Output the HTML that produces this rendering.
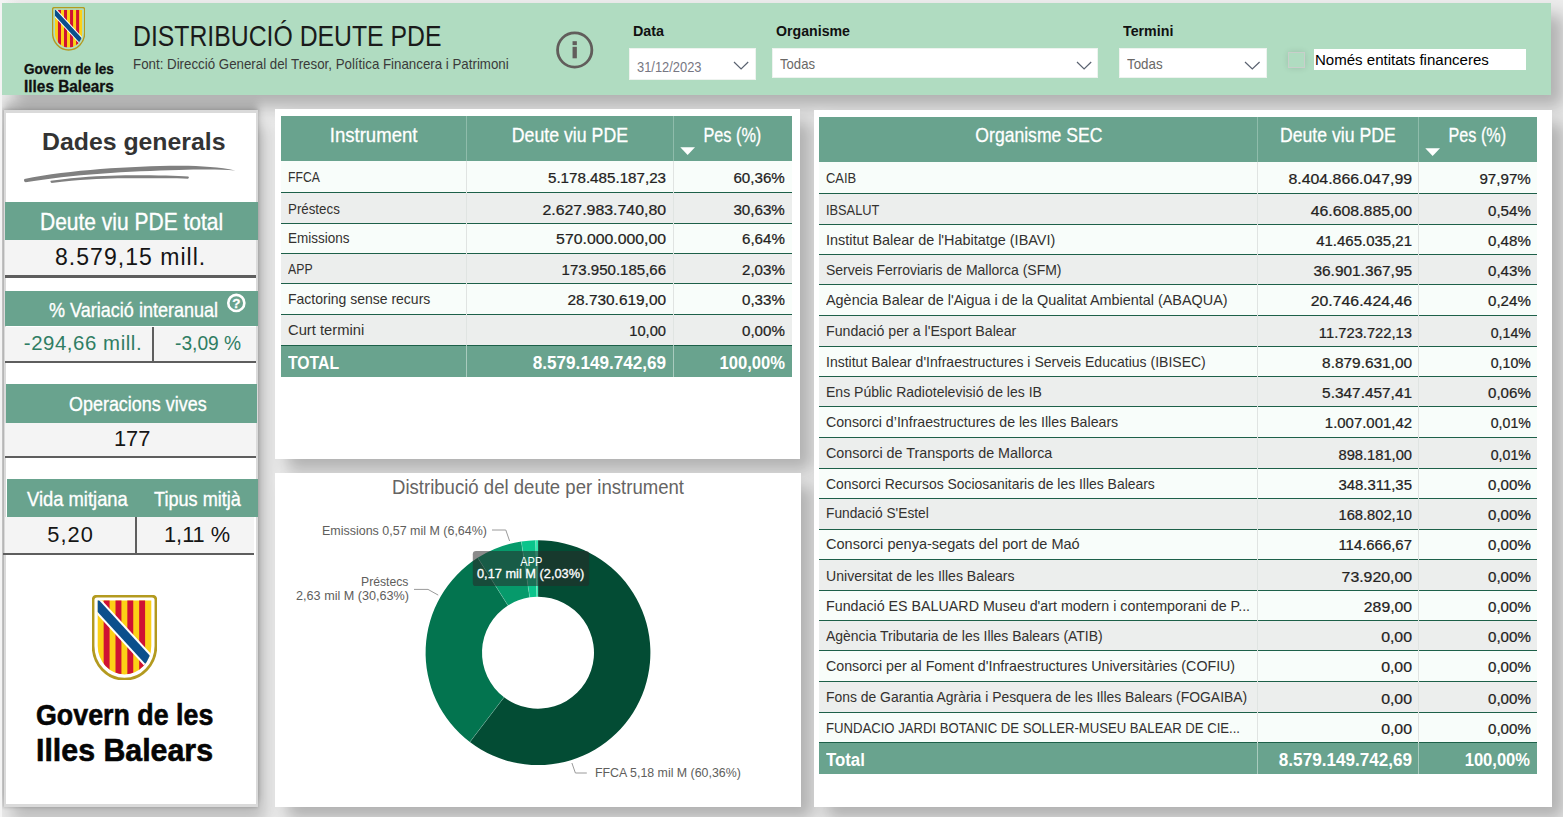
<!DOCTYPE html>
<html lang="ca"><head><meta charset="utf-8"><title>Distribució deute PDE</title>
<style>
html,body{margin:0;padding:0}
body{width:1563px;height:817px;overflow:hidden;background:#ececec;position:relative;font-family:'Liberation Sans', sans-serif}
#c{position:absolute;left:0;top:0;width:1563px;height:817px;overflow:hidden}
#c div,#c svg{position:absolute}
.t{position:absolute;white-space:nowrap;line-height:1;font-family:'Liberation Sans', sans-serif}
</style></head><body><div id="c">
<div style="left:0.00px;top:0.00px;width:2.00px;height:817.00px;background:#f4f4f4;z-index:20;"></div>
<div style="left:2.00px;top:0.00px;width:16.00px;height:3.00px;background:linear-gradient(to right,#f4f4f4,#ececec);z-index:1;"></div>
<div style="left:2.00px;top:3.00px;width:1549.00px;height:92.00px;background:#b0dcc1;z-index:1;box-shadow:12px 12px 16px rgba(0,0,0,0.25);"></div>
<svg style="left:52.10px;top:7.30px;z-index:6" width="33.20" height="43.57" viewBox="0 0 65 85.3">
<defs><clipPath id="ci52"><path d="M5.7,5.5 H59.3 V51 A26.8,28.4 0 0 1 5.7,51 Z"/></clipPath></defs>
<path d="M5,1.1 H60 Q63.9,1.1 63.9,5 V51 A31.4,33.2 0 0 1 1.1,51 V5 Q1.1,1.1 5,1.1 Z" fill="none" stroke="#b39a1f" stroke-width="2.7"/>
<g clip-path="url(#ci52)">
<rect x="5" y="5" width="55" height="76" fill="#fcd116"/>
<rect x="11.66" y="5" width="5.92" height="76" fill="#cf1233"/>
<rect x="23.5" y="5" width="5.92" height="76" fill="#cf1233"/>
<rect x="35.34" y="5" width="5.92" height="76" fill="#cf1233"/>
<rect x="47.18" y="5" width="5.92" height="76" fill="#cf1233"/>
<line x1="-5" y1="-1.3" x2="65" y2="75.14" stroke="#ffffff" stroke-width="13"/>
<line x1="-5" y1="-1.3" x2="65" y2="75.14" stroke="#0b4f8c" stroke-width="9"/>
</g></svg>
<svg style="left:554px;top:30px;z-index:6" width="42" height="42" viewBox="554 30 42 42">
<circle cx="574.7" cy="50" r="17.15" fill="none" stroke="#615d5b" stroke-width="2.8"/>
<rect x="572.55" y="46.8" width="4.3" height="11.5" fill="#615d5b"/><rect x="572.55" y="41.2" width="4.3" height="3.9" fill="#615d5b"/></svg>
<div style="left:629.00px;top:48.00px;width:127.00px;height:32.00px;background:#ffffff;z-index:4;box-shadow:inset 0 0 0 1px #eef3ef;"></div>
<svg style="left:731.8px;top:60.0px;z-index:6" width="18.2" height="11.0" viewBox="731.8 60.0 18.2 11.0"><polyline points="733.8,62 740.9,69 748,62" fill="none" stroke="#5a6270" stroke-width="1.2"/></svg>
<div style="left:772.00px;top:48.40px;width:326.00px;height:29.50px;background:#ffffff;z-index:4;box-shadow:inset 0 0 0 1px #eef3ef;"></div>
<svg style="left:1075.4px;top:60.0px;z-index:6" width="18.2" height="11.0" viewBox="1075.4 60.0 18.2 11.0"><polyline points="1077.4,62 1084.5,69 1091.6,62" fill="none" stroke="#5a6270" stroke-width="1.2"/></svg>
<div style="left:1119.00px;top:48.40px;width:148.00px;height:29.50px;background:#ffffff;z-index:4;box-shadow:inset 0 0 0 1px #eef3ef;"></div>
<svg style="left:1243.0px;top:60.0px;z-index:6" width="18.6" height="11.0" viewBox="1243.0 60.0 18.6 11.0"><polyline points="1245,62 1252.3,69 1259.6,62" fill="none" stroke="#5a6270" stroke-width="1.2"/></svg>
<div style="left:1288.40px;top:52.20px;width:16.80px;height:16.20px;background:rgba(176,220,193,0.6);z-index:4;box-shadow:inset 0 0 0 1px #c9cfcb, 0 0 6px rgba(0,0,0,0.12);"></div>
<div style="left:1314.00px;top:48.80px;width:212.00px;height:20.90px;background:#ffffff;z-index:4;"></div>
<div style="left:4.00px;top:110.00px;width:254.00px;height:696.50px;background:transparent;z-index:1;box-shadow:-1px 0 3px 1px rgba(0,0,0,0.15), 7px 15px 16px rgba(0,0,0,0.2), 0 -7px 8px rgba(0,0,0,0.19);"></div>
<div style="left:4.00px;top:110.00px;width:254.00px;height:696.50px;background:#dadada;z-index:2;"></div>
<div style="left:6.40px;top:112.80px;width:249.40px;height:691.20px;background:#ffffff;z-index:3;"></div>
<svg style="left:0;top:0;z-index:6" width="260" height="200" viewBox="0 0 260 200">
<path d="M24.4,179 C70,169.8 130,166.2 179,165.8 C200,165.7 220,167.3 235.2,170.4 C220,169.3 200,169.6 179,169.9 C130,171 70,174.6 25.6,182.2 Q23.2,181.4 24.4,179 Z" fill="#808080"/>
<path d="M50.6,180.7 C80,176.8 100,175.7 117.5,175.4 C150,175.1 175,175.8 188.4,176.5 Q189.7,177.7 188,178.7 C170,178.3 150,178.2 117.5,178.3 C100,178.6 80,179.8 51.6,182.9 Q49.8,182.2 50.6,180.7 Z" fill="#808080"/></svg>
<div style="left:4.80px;top:201.60px;width:253.20px;height:38.50px;background:#69a38e;z-index:4;"></div>
<div style="left:4.80px;top:240.10px;width:251.10px;height:35.30px;background:#f4f4f4;z-index:4;"></div>
<div style="left:4.80px;top:275.20px;width:251.10px;height:2.50px;background:#5e5e5e;z-index:4;"></div>
<div style="left:4.80px;top:291.20px;width:253.20px;height:35.30px;background:#69a38e;z-index:4;"></div>
<svg style="left:225px;top:292px;z-index:6" width="24" height="24" viewBox="225 292 24 24">
<circle cx="236.3" cy="302.9" r="8.05" fill="none" stroke="#fff" stroke-width="2.6"/></svg>
<div style="left:4.80px;top:326.50px;width:251.10px;height:34.30px;background:#f4f4f4;z-index:4;"></div>
<div style="left:4.80px;top:360.60px;width:251.10px;height:2.30px;background:#5e5e5e;z-index:4;"></div>
<div style="left:151.50px;top:326.50px;width:2.30px;height:36.40px;background:#5e5e5e;z-index:4;"></div>
<div style="left:6.20px;top:384.20px;width:250.80px;height:38.60px;background:#69a38e;z-index:4;"></div>
<div style="left:4.80px;top:422.80px;width:251.10px;height:33.20px;background:#f4f4f4;z-index:4;"></div>
<div style="left:4.80px;top:455.80px;width:251.10px;height:2.40px;background:#5e5e5e;z-index:4;"></div>
<div style="left:7.30px;top:478.60px;width:250.70px;height:38.40px;background:#69a38e;z-index:4;"></div>
<div style="left:4.80px;top:517.00px;width:249.20px;height:35.80px;background:#f4f4f4;z-index:4;"></div>
<div style="left:3.30px;top:552.80px;width:250.70px;height:2.60px;background:#5e5e5e;z-index:4;"></div>
<div style="left:134.80px;top:517.00px;width:2.20px;height:38.40px;background:#5e5e5e;z-index:4;"></div>
<svg style="left:92.00px;top:594.70px;z-index:6" width="65.00" height="85.30" viewBox="0 0 65 85.3">
<defs><clipPath id="ci92"><path d="M5.7,5.5 H59.3 V51 A26.8,28.4 0 0 1 5.7,51 Z"/></clipPath></defs>
<path d="M5,1.1 H60 Q63.9,1.1 63.9,5 V51 A31.4,33.2 0 0 1 1.1,51 V5 Q1.1,1.1 5,1.1 Z" fill="none" stroke="#b39a1f" stroke-width="2.7"/>
<g clip-path="url(#ci92)">
<rect x="5" y="5" width="55" height="76" fill="#fcd116"/>
<rect x="11.66" y="5" width="5.92" height="76" fill="#cf1233"/>
<rect x="23.5" y="5" width="5.92" height="76" fill="#cf1233"/>
<rect x="35.34" y="5" width="5.92" height="76" fill="#cf1233"/>
<rect x="47.18" y="5" width="5.92" height="76" fill="#cf1233"/>
<line x1="-5" y1="-1.3" x2="65" y2="75.14" stroke="#ffffff" stroke-width="13"/>
<line x1="-5" y1="-1.3" x2="65" y2="75.14" stroke="#0b4f8c" stroke-width="9"/>
</g></svg>
<div style="left:275.00px;top:109.20px;width:525.20px;height:349.70px;background:transparent;z-index:1;box-shadow:12px 12px 16px rgba(0,0,0,0.25);"></div>
<div style="left:275.00px;top:109.20px;width:525.20px;height:349.70px;background:#ffffff;z-index:2;"></div>
<div style="left:281.00px;top:116.00px;width:511.00px;height:45.20px;background:#69a38e;z-index:3;"></div>
<div style="left:281.00px;top:161.20px;width:511.00px;height:31.00px;background:#f8fdfa;z-index:3;"></div>
<div style="left:281.00px;top:191.50px;width:511.00px;height:1.50px;background:#1d6049;z-index:4;"></div>
<div style="left:281.00px;top:192.20px;width:511.00px;height:31.10px;background:#eceeed;z-index:3;"></div>
<div style="left:281.00px;top:222.50px;width:511.00px;height:1.50px;background:#1d6049;z-index:4;"></div>
<div style="left:281.00px;top:223.30px;width:511.00px;height:30.10px;background:#f8fdfa;z-index:3;"></div>
<div style="left:281.00px;top:252.50px;width:511.00px;height:1.50px;background:#1d6049;z-index:4;"></div>
<div style="left:281.00px;top:253.40px;width:511.00px;height:30.20px;background:#eceeed;z-index:3;"></div>
<div style="left:281.00px;top:282.50px;width:511.00px;height:1.50px;background:#1d6049;z-index:4;"></div>
<div style="left:281.00px;top:283.60px;width:511.00px;height:30.30px;background:#f8fdfa;z-index:3;"></div>
<div style="left:281.00px;top:313.50px;width:511.00px;height:1.50px;background:#1d6049;z-index:4;"></div>
<div style="left:281.00px;top:313.90px;width:511.00px;height:31.20px;background:#eceeed;z-index:3;"></div>
<div style="left:281.00px;top:344.50px;width:511.00px;height:1.50px;background:#1d6049;z-index:4;"></div>
<div style="left:465.60px;top:116.00px;width:1.40px;height:45.20px;background:#8fbcab;z-index:4;"></div>
<div style="left:465.60px;top:161.20px;width:1.40px;height:183.90px;background:#e0e4e2;z-index:5;"></div>
<div style="left:465.60px;top:345.10px;width:1.40px;height:32.30px;background:#a9cbbe;z-index:5;"></div>
<div style="left:672.50px;top:116.00px;width:1.40px;height:45.20px;background:#8fbcab;z-index:4;"></div>
<div style="left:672.50px;top:161.20px;width:1.40px;height:183.90px;background:#e0e4e2;z-index:5;"></div>
<div style="left:672.50px;top:345.10px;width:1.40px;height:32.30px;background:#a9cbbe;z-index:5;"></div>
<div style="left:281.00px;top:346.00px;width:511.00px;height:31.40px;background:#69a38e;z-index:3;"></div>
<svg style="left:679.7px;top:147.0px;z-index:6" width="16" height="9" viewBox="0 0 16 9"><polygon points="0.3,0.3 15,0.3 7.65,8" fill="#fff"/></svg>
<div style="left:813.60px;top:110.20px;width:738.50px;height:696.80px;background:transparent;z-index:1;box-shadow:12px 12px 16px rgba(0,0,0,0.25);"></div>
<div style="left:813.60px;top:110.20px;width:738.50px;height:696.80px;background:#ffffff;z-index:2;"></div>
<div style="left:819.40px;top:117.00px;width:717.60px;height:45.00px;background:#69a38e;z-index:3;"></div>
<div style="left:819.40px;top:162.00px;width:717.60px;height:31.20px;background:#f8fdfa;z-index:3;"></div>
<div style="left:819.40px;top:192.50px;width:717.60px;height:1.50px;background:#1d6049;z-index:4;"></div>
<div style="left:819.40px;top:193.20px;width:717.60px;height:31.10px;background:#eceeed;z-index:3;"></div>
<div style="left:819.40px;top:223.50px;width:717.60px;height:1.50px;background:#1d6049;z-index:4;"></div>
<div style="left:819.40px;top:224.30px;width:717.60px;height:29.90px;background:#f8fdfa;z-index:3;"></div>
<div style="left:819.40px;top:253.50px;width:717.60px;height:1.50px;background:#1d6049;z-index:4;"></div>
<div style="left:819.40px;top:254.20px;width:717.60px;height:30.50px;background:#eceeed;z-index:3;"></div>
<div style="left:819.40px;top:283.50px;width:717.60px;height:1.50px;background:#1d6049;z-index:4;"></div>
<div style="left:819.40px;top:284.70px;width:717.60px;height:30.20px;background:#f8fdfa;z-index:3;"></div>
<div style="left:819.40px;top:314.50px;width:717.60px;height:1.50px;background:#1d6049;z-index:4;"></div>
<div style="left:819.40px;top:314.90px;width:717.60px;height:31.10px;background:#eceeed;z-index:3;"></div>
<div style="left:819.40px;top:345.50px;width:717.60px;height:1.50px;background:#1d6049;z-index:4;"></div>
<div style="left:819.40px;top:346.00px;width:717.60px;height:30.50px;background:#f8fdfa;z-index:3;"></div>
<div style="left:819.40px;top:375.50px;width:717.60px;height:1.50px;background:#1d6049;z-index:4;"></div>
<div style="left:819.40px;top:376.50px;width:717.60px;height:30.20px;background:#eceeed;z-index:3;"></div>
<div style="left:819.40px;top:405.50px;width:717.60px;height:1.50px;background:#1d6049;z-index:4;"></div>
<div style="left:819.40px;top:406.70px;width:717.60px;height:30.20px;background:#f8fdfa;z-index:3;"></div>
<div style="left:819.40px;top:436.50px;width:717.60px;height:1.50px;background:#1d6049;z-index:4;"></div>
<div style="left:819.40px;top:436.90px;width:717.60px;height:31.20px;background:#eceeed;z-index:3;"></div>
<div style="left:819.40px;top:467.50px;width:717.60px;height:1.50px;background:#1d6049;z-index:4;"></div>
<div style="left:819.40px;top:468.10px;width:717.60px;height:30.50px;background:#f8fdfa;z-index:3;"></div>
<div style="left:819.40px;top:497.50px;width:717.60px;height:1.50px;background:#1d6049;z-index:4;"></div>
<div style="left:819.40px;top:498.60px;width:717.60px;height:30.40px;background:#eceeed;z-index:3;"></div>
<div style="left:819.40px;top:528.50px;width:717.60px;height:1.50px;background:#1d6049;z-index:4;"></div>
<div style="left:819.40px;top:529.00px;width:717.60px;height:30.30px;background:#f8fdfa;z-index:3;"></div>
<div style="left:819.40px;top:558.50px;width:717.60px;height:1.50px;background:#1d6049;z-index:4;"></div>
<div style="left:819.40px;top:559.30px;width:717.60px;height:30.70px;background:#eceeed;z-index:3;"></div>
<div style="left:819.40px;top:589.50px;width:717.60px;height:1.50px;background:#1d6049;z-index:4;"></div>
<div style="left:819.40px;top:590.00px;width:717.60px;height:30.50px;background:#f8fdfa;z-index:3;"></div>
<div style="left:819.40px;top:619.50px;width:717.60px;height:1.50px;background:#1d6049;z-index:4;"></div>
<div style="left:819.40px;top:620.50px;width:717.60px;height:29.70px;background:#eceeed;z-index:3;"></div>
<div style="left:819.40px;top:649.50px;width:717.60px;height:1.50px;background:#1d6049;z-index:4;"></div>
<div style="left:819.40px;top:650.20px;width:717.60px;height:30.80px;background:#f8fdfa;z-index:3;"></div>
<div style="left:819.40px;top:680.50px;width:717.60px;height:1.50px;background:#1d6049;z-index:4;"></div>
<div style="left:819.40px;top:681.00px;width:717.60px;height:31.40px;background:#eceeed;z-index:3;"></div>
<div style="left:819.40px;top:711.50px;width:717.60px;height:1.50px;background:#1d6049;z-index:4;"></div>
<div style="left:819.40px;top:712.40px;width:717.60px;height:30.10px;background:#f8fdfa;z-index:3;"></div>
<div style="left:819.40px;top:741.50px;width:717.60px;height:1.50px;background:#1d6049;z-index:4;"></div>
<div style="left:1256.90px;top:117.00px;width:1.40px;height:45.00px;background:#8fbcab;z-index:4;"></div>
<div style="left:1256.90px;top:162.00px;width:1.40px;height:580.50px;background:#e0e4e2;z-index:5;"></div>
<div style="left:1256.90px;top:742.50px;width:1.40px;height:31.80px;background:#a9cbbe;z-index:5;"></div>
<div style="left:1417.70px;top:117.00px;width:1.40px;height:45.00px;background:#8fbcab;z-index:4;"></div>
<div style="left:1417.70px;top:162.00px;width:1.40px;height:580.50px;background:#e0e4e2;z-index:5;"></div>
<div style="left:1417.70px;top:742.50px;width:1.40px;height:31.80px;background:#a9cbbe;z-index:5;"></div>
<div style="left:819.40px;top:743.00px;width:717.60px;height:31.30px;background:#69a38e;z-index:3;"></div>
<svg style="left:1424.9px;top:148.0px;z-index:6" width="16" height="9" viewBox="0 0 16 9"><polygon points="0.3,0.3 15,0.3 7.65,8" fill="#fff"/></svg>
<div style="left:275.00px;top:473.30px;width:526.20px;height:333.40px;background:transparent;z-index:1;box-shadow:12px 12px 16px rgba(0,0,0,0.25);"></div>
<div style="left:275.00px;top:473.30px;width:526.20px;height:333.40px;background:#ffffff;z-index:2;"></div>
<svg style="left:275px;top:474px;z-index:4" width="526" height="332" viewBox="275 474 526 332">
<path d="M538.00,540.30 A112.4,112.4 0 1 1 469.89,742.12 L504.07,697.25 A56,56 0 1 0 538.00,596.70 Z" fill="#034c34"/><line x1="538.00" y1="540.30" x2="538.00" y2="596.70" stroke="rgba(255,255,255,0.28)" stroke-width="0.7"/><path d="M469.89,742.12 A112.4,112.4 0 0 1 477.71,557.84 L507.96,605.44 A56,56 0 0 0 504.07,697.25 Z" fill="#03744f"/><line x1="469.89" y1="742.12" x2="504.07" y2="697.25" stroke="rgba(255,255,255,0.28)" stroke-width="0.7"/><path d="M477.71,557.84 A112.4,112.4 0 0 1 521.32,541.54 L529.69,597.32 A56,56 0 0 0 507.96,605.44 Z" fill="#069a6b"/><line x1="477.71" y1="557.84" x2="507.96" y2="605.44" stroke="rgba(255,255,255,0.28)" stroke-width="0.7"/><path d="M521.32,541.54 A112.4,112.4 0 0 1 535.60,540.33 L536.80,596.71 A56,56 0 0 0 529.69,597.32 Z" fill="#0ac48b"/><line x1="521.32" y1="541.54" x2="529.69" y2="597.32" stroke="rgba(255,255,255,0.28)" stroke-width="0.7"/><path d="M535.60,540.33 A112.4,112.4 0 0 1 538.00,540.30 L538.00,596.70 A56,56 0 0 0 536.80,596.71 Z" fill="#2fe6ad"/><line x1="535.60" y1="540.33" x2="536.80" y2="596.71" stroke="rgba(255,255,255,0.28)" stroke-width="0.7"/>
<polyline points="492,530 505.8,530 509.6,541" fill="none" stroke="#9a9a9a" stroke-width="1"/>
<polyline points="414,589.4 428,589.4 438.2,595.1" fill="none" stroke="#9a9a9a" stroke-width="1"/>
<polyline points="571.9,763 575.4,773 586.8,773" fill="none" stroke="#9a9a9a" stroke-width="1"/>
<rect x="472.8" y="551.1" width="116.3" height="35" rx="3.2" fill="rgba(40,40,40,0.54)"/>
</svg>
<span class="t" style="left:23.70px;top:62px;font-size:14.4px;color:#111;z-index:5;transform:scaleX(0.9434);transform-origin:left center;font-weight:700;-webkit-text-stroke:0.3px #111">Govern de les</span>
<span class="t" style="left:23.70px;top:79px;font-size:16px;color:#111;z-index:5;transform:scaleX(0.9614);transform-origin:left center;font-weight:700;-webkit-text-stroke:0.3px #111">Illes Balears</span>
<span class="t" style="left:133.40px;top:22px;font-size:29px;color:#1a1a1a;z-index:5;transform:scaleX(0.8547);transform-origin:left center">DISTRIBUCIÓ DEUTE PDE</span>
<span class="t" style="left:133.40px;top:57px;font-size:14.5px;color:#3a3a3a;z-index:5;transform:scaleX(0.9177);transform-origin:left center">Font: Direcció General del Tresor, Política Financera i Patrimoni</span>
<span class="t" style="left:632.80px;top:23px;font-size:15.1px;color:#111;z-index:5;transform:scaleX(0.9505);transform-origin:left center;font-weight:700">Data</span>
<span class="t" style="left:636.50px;top:59px;font-size:15.3px;color:#777783;z-index:5;transform:scaleX(0.8424);transform-origin:left center">31/12/2023</span>
<span class="t" style="left:775.50px;top:23px;font-size:15.1px;color:#111;z-index:5;transform:scaleX(0.9384);transform-origin:left center;font-weight:700">Organisme</span>
<span class="t" style="left:779.60px;top:57px;font-size:14.8px;color:#6a6866;z-index:5;transform:scaleX(0.8861);transform-origin:left center">Todas</span>
<span class="t" style="left:1123.20px;top:23px;font-size:15.1px;color:#111;z-index:5;transform:scaleX(0.9437);transform-origin:left center;font-weight:700">Termini</span>
<span class="t" style="left:1126.50px;top:57px;font-size:14.8px;color:#6a6866;z-index:5;transform:scaleX(0.9013);transform-origin:left center">Todas</span>
<span class="t" style="left:1315.00px;top:52px;font-size:15.4px;color:#000;z-index:5;transform:scaleX(0.9767);transform-origin:left center">Només entitats financeres</span>
<span class="t" style="left:41.50px;top:130px;font-size:24.5px;color:#333;z-index:5;transform:scaleX(1.0131);transform-origin:left center;font-weight:700">Dades generals</span>
<span class="t" style="left:40.30px;top:210px;font-size:23.9px;color:#fff;z-index:5;transform:scaleX(0.8787);transform-origin:left center;-webkit-text-stroke:0.35px #fff">Deute viu PDE total</span>
<span class="t" style="left:55.00px;top:246px;font-size:23px;color:#151515;z-index:5;transform:scaleX(1.0000);transform-origin:left center;letter-spacing:1.030px">8.579,15 mill.</span>
<span class="t" style="left:48.90px;top:300px;font-size:20.8px;color:#fff;z-index:5;transform:scaleX(0.8672);transform-origin:left center;-webkit-text-stroke:0.35px #fff">% Variació interanual</span>
<span class="t" style="left:232.21px;top:297px;font-size:13.4px;color:#fff;z-index:7;transform:scaleX(1.0000);transform-origin:center center;font-weight:700;-webkit-text-stroke:0.3px #fff">?</span>
<span class="t" style="left:23.80px;top:333px;font-size:20.4px;color:#2f7d63;z-index:5;transform:scaleX(1.0000);transform-origin:left center;letter-spacing:0.560px">-294,66 mill.</span>
<span class="t" style="left:175.00px;top:333px;font-size:20.4px;color:#2f7d63;z-index:5;transform:scaleX(0.9405);transform-origin:left center">-3,09 %</span>
<span class="t" style="left:68.70px;top:394px;font-size:20.4px;color:#fff;z-index:5;transform:scaleX(0.8798);transform-origin:left center;-webkit-text-stroke:0.35px #fff">Operacions vives</span>
<span class="t" style="left:113.90px;top:428px;font-size:21.8px;color:#151515;z-index:5;transform:scaleX(1.0000);transform-origin:left center;letter-spacing:0.062px">177</span>
<span class="t" style="left:26.90px;top:489px;font-size:20.8px;color:#fff;z-index:5;transform:scaleX(0.8836);transform-origin:left center;-webkit-text-stroke:0.35px #fff">Vida mitjana</span>
<span class="t" style="left:154.20px;top:489px;font-size:20.8px;color:#fff;z-index:5;transform:scaleX(0.8709);transform-origin:left center;-webkit-text-stroke:0.35px #fff">Tipus mitjà</span>
<span class="t" style="left:47.30px;top:524px;font-size:21.8px;color:#151515;z-index:5;transform:scaleX(1.0000);transform-origin:left center;letter-spacing:1.054px">5,20</span>
<span class="t" style="left:164.00px;top:524px;font-size:21.8px;color:#151515;z-index:5;transform:scaleX(0.9977);transform-origin:left center">1,11 %</span>
<span class="t" style="left:35.50px;top:699px;font-size:30.4px;color:#050505;z-index:5;transform:scaleX(0.8821);transform-origin:left center;font-weight:700;-webkit-text-stroke:0.6px #050505">Govern de les</span>
<span class="t" style="left:35.80px;top:734px;font-size:32.2px;color:#050505;z-index:5;transform:scaleX(0.9420);transform-origin:left center;font-weight:700;-webkit-text-stroke:0.6px #050505">Illes Balears</span>
<span class="t" style="left:287.80px;top:170px;font-size:14.5px;color:#33312f;z-index:5;transform:scaleX(0.8400);transform-origin:left center">FFCA</span>
<span class="t" style="left:554.35px;top:171px;font-size:14.4px;color:#232221;z-index:5;transform:scaleX(1.0540);transform-origin:right center;-webkit-text-stroke:0.22px #232221">5.178.485.187,23</span>
<span class="t" style="left:735.89px;top:171px;font-size:14.4px;color:#232221;z-index:5;transform:scaleX(1.0534);transform-origin:right center;-webkit-text-stroke:0.22px #232221">60,36%</span>
<span class="t" style="left:287.80px;top:202px;font-size:14.5px;color:#33312f;z-index:5;transform:scaleX(0.9181);transform-origin:left center">Préstecs</span>
<span class="t" style="left:554.35px;top:203px;font-size:14.4px;color:#232221;z-index:5;transform:scaleX(1.1028);transform-origin:right center;-webkit-text-stroke:0.22px #232221">2.627.983.740,80</span>
<span class="t" style="left:735.89px;top:203px;font-size:14.4px;color:#232221;z-index:5;transform:scaleX(1.0534);transform-origin:right center;-webkit-text-stroke:0.22px #232221">30,63%</span>
<span class="t" style="left:287.80px;top:231px;font-size:14.5px;color:#33312f;z-index:5;transform:scaleX(0.9307);transform-origin:left center">Emissions</span>
<span class="t" style="left:566.35px;top:232px;font-size:14.4px;color:#232221;z-index:5;transform:scaleX(1.0988);transform-origin:right center;-webkit-text-stroke:0.22px #232221">570.000.000,00</span>
<span class="t" style="left:743.89px;top:232px;font-size:14.4px;color:#232221;z-index:5;transform:scaleX(1.0485);transform-origin:right center;-webkit-text-stroke:0.22px #232221">6,64%</span>
<span class="t" style="left:287.80px;top:262px;font-size:14.5px;color:#33312f;z-index:5;transform:scaleX(0.8478);transform-origin:left center">APP</span>
<span class="t" style="left:566.35px;top:263px;font-size:14.4px;color:#232221;z-index:5;transform:scaleX(1.0442);transform-origin:right center;-webkit-text-stroke:0.22px #232221">173.950.185,66</span>
<span class="t" style="left:743.89px;top:263px;font-size:14.4px;color:#232221;z-index:5;transform:scaleX(1.0485);transform-origin:right center;-webkit-text-stroke:0.22px #232221">2,03%</span>
<span class="t" style="left:287.80px;top:292px;font-size:14.5px;color:#33312f;z-index:5;transform:scaleX(0.9648);transform-origin:left center">Factoring sense recurs</span>
<span class="t" style="left:574.37px;top:293px;font-size:14.4px;color:#232221;z-index:5;transform:scaleX(1.0710);transform-origin:right center;-webkit-text-stroke:0.22px #232221">28.730.619,00</span>
<span class="t" style="left:743.89px;top:293px;font-size:14.4px;color:#232221;z-index:5;transform:scaleX(1.0485);transform-origin:right center;-webkit-text-stroke:0.22px #232221">0,33%</span>
<span class="t" style="left:287.80px;top:323px;font-size:14.5px;color:#33312f;z-index:5;transform:scaleX(1.0168);transform-origin:left center">Curt termini</span>
<span class="t" style="left:630.38px;top:324px;font-size:14.4px;color:#232221;z-index:5;transform:scaleX(1.0215);transform-origin:right center;-webkit-text-stroke:0.22px #232221">10,00</span>
<span class="t" style="left:743.89px;top:324px;font-size:14.4px;color:#232221;z-index:5;transform:scaleX(1.0485);transform-origin:right center;-webkit-text-stroke:0.22px #232221">0,00%</span>
<span class="t" style="left:324.04px;top:124px;font-size:21px;color:#fff;z-index:5;transform:scaleX(0.8839);transform-origin:center center;-webkit-text-stroke:0.3px #fff">Instrument</span>
<span class="t" style="left:500.88px;top:124px;font-size:21px;color:#fff;z-index:5;transform:scaleX(0.8444);transform-origin:center center;-webkit-text-stroke:0.3px #fff">Deute viu PDE</span>
<span class="t" style="left:695.26px;top:124px;font-size:21px;color:#fff;z-index:5;transform:scaleX(0.7752);transform-origin:center center;-webkit-text-stroke:0.3px #fff">Pes (%)</span>
<span class="t" style="left:287.80px;top:355px;font-size:17.5px;color:#fff;z-index:5;transform:scaleX(0.8992);transform-origin:left center;font-weight:700">TOTAL</span>
<span class="t" style="left:526.26px;top:354px;font-size:18px;color:#fff;z-index:5;transform:scaleX(0.9519);transform-origin:right center;font-weight:700">8.579.149.742,69</span>
<span class="t" style="left:713.64px;top:354px;font-size:18px;color:#fff;z-index:5;transform:scaleX(0.9231);transform-origin:right center;font-weight:700">100,00%</span>
<span class="t" style="left:826.20px;top:171px;font-size:14.5px;color:#33312f;z-index:5;transform:scaleX(0.8923);transform-origin:left center">CAIB</span>
<span class="t" style="left:1300.35px;top:172px;font-size:14.4px;color:#232221;z-index:5;transform:scaleX(1.1028);transform-origin:right center;-webkit-text-stroke:0.22px #232221">8.404.866.047,99</span>
<span class="t" style="left:1481.59px;top:172px;font-size:14.4px;color:#232221;z-index:5;transform:scaleX(1.0534);transform-origin:right center;-webkit-text-stroke:0.22px #232221">97,97%</span>
<span class="t" style="left:826.20px;top:203px;font-size:14.5px;color:#33312f;z-index:5;transform:scaleX(0.8819);transform-origin:left center">IBSALUT</span>
<span class="t" style="left:1320.37px;top:204px;font-size:14.4px;color:#232221;z-index:5;transform:scaleX(1.1007);transform-origin:right center;-webkit-text-stroke:0.22px #232221">46.608.885,00</span>
<span class="t" style="left:1489.59px;top:204px;font-size:14.4px;color:#232221;z-index:5;transform:scaleX(1.0485);transform-origin:right center;-webkit-text-stroke:0.22px #232221">0,54%</span>
<span class="t" style="left:826.20px;top:233px;font-size:14.5px;color:#33312f;z-index:5;transform:scaleX(0.9940);transform-origin:left center">Institut Balear de l&#x27;Habitatge (IBAVI)</span>
<span class="t" style="left:1320.37px;top:234px;font-size:14.4px;color:#232221;z-index:5;transform:scaleX(1.0414);transform-origin:right center;-webkit-text-stroke:0.22px #232221">41.465.035,21</span>
<span class="t" style="left:1489.59px;top:234px;font-size:14.4px;color:#232221;z-index:5;transform:scaleX(1.0485);transform-origin:right center;-webkit-text-stroke:0.22px #232221">0,48%</span>
<span class="t" style="left:826.20px;top:263px;font-size:14.5px;color:#33312f;z-index:5;transform:scaleX(0.9646);transform-origin:left center">Serveis Ferroviaris de Mallorca (SFM)</span>
<span class="t" style="left:1320.37px;top:264px;font-size:14.4px;color:#232221;z-index:5;transform:scaleX(1.0710);transform-origin:right center;-webkit-text-stroke:0.22px #232221">36.901.367,95</span>
<span class="t" style="left:1489.59px;top:264px;font-size:14.4px;color:#232221;z-index:5;transform:scaleX(1.0485);transform-origin:right center;-webkit-text-stroke:0.22px #232221">0,43%</span>
<span class="t" style="left:826.20px;top:293px;font-size:14.5px;color:#33312f;z-index:5;transform:scaleX(0.9937);transform-origin:left center">Agència Balear de l&#x27;Aigua i de la Qualitat Ambiental (ABAQUA)</span>
<span class="t" style="left:1320.37px;top:294px;font-size:14.4px;color:#232221;z-index:5;transform:scaleX(1.1007);transform-origin:right center;-webkit-text-stroke:0.22px #232221">20.746.424,46</span>
<span class="t" style="left:1489.59px;top:294px;font-size:14.4px;color:#232221;z-index:5;transform:scaleX(1.0485);transform-origin:right center;-webkit-text-stroke:0.22px #232221">0,24%</span>
<span class="t" style="left:826.20px;top:324px;font-size:14.5px;color:#33312f;z-index:5;transform:scaleX(0.9779);transform-origin:left center">Fundació per a l&#x27;Esport Balear</span>
<span class="t" style="left:1321.43px;top:326px;font-size:14.4px;color:#232221;z-index:5;transform:scaleX(1.0235);transform-origin:right center;-webkit-text-stroke:0.22px #232221">11.723.722,13</span>
<span class="t" style="left:1489.59px;top:326px;font-size:14.4px;color:#232221;z-index:5;transform:scaleX(0.9816);transform-origin:right center;-webkit-text-stroke:0.22px #232221">0,14%</span>
<span class="t" style="left:826.20px;top:355px;font-size:14.5px;color:#33312f;z-index:5;transform:scaleX(0.9668);transform-origin:left center">Institut Balear d&#x27;Infraestructures i Serveis Educatius (IBISEC)</span>
<span class="t" style="left:1328.37px;top:356px;font-size:14.4px;color:#232221;z-index:5;transform:scaleX(1.0703);transform-origin:right center;-webkit-text-stroke:0.22px #232221">8.879.631,00</span>
<span class="t" style="left:1489.59px;top:356px;font-size:14.4px;color:#232221;z-index:5;transform:scaleX(0.9816);transform-origin:right center;-webkit-text-stroke:0.22px #232221">0,10%</span>
<span class="t" style="left:826.20px;top:385px;font-size:14.5px;color:#33312f;z-index:5;transform:scaleX(0.9670);transform-origin:left center">Ens Públic Radiotelevisió de les IB</span>
<span class="t" style="left:1328.37px;top:386px;font-size:14.4px;color:#232221;z-index:5;transform:scaleX(1.0703);transform-origin:right center;-webkit-text-stroke:0.22px #232221">5.347.457,41</span>
<span class="t" style="left:1489.59px;top:386px;font-size:14.4px;color:#232221;z-index:5;transform:scaleX(1.0485);transform-origin:right center;-webkit-text-stroke:0.22px #232221">0,06%</span>
<span class="t" style="left:826.20px;top:415px;font-size:14.5px;color:#33312f;z-index:5;transform:scaleX(0.9773);transform-origin:left center">Consorci d’Infraestructures de les Illes Balears</span>
<span class="t" style="left:1328.37px;top:416px;font-size:14.4px;color:#232221;z-index:5;transform:scaleX(1.0378);transform-origin:right center;-webkit-text-stroke:0.22px #232221">1.007.001,42</span>
<span class="t" style="left:1489.59px;top:416px;font-size:14.4px;color:#232221;z-index:5;transform:scaleX(0.9816);transform-origin:right center;-webkit-text-stroke:0.22px #232221">0,01%</span>
<span class="t" style="left:826.20px;top:446px;font-size:14.5px;color:#33312f;z-index:5;transform:scaleX(0.9887);transform-origin:left center">Consorci de Transports de Mallorca</span>
<span class="t" style="left:1340.37px;top:448px;font-size:14.4px;color:#232221;z-index:5;transform:scaleX(1.0215);transform-origin:right center;-webkit-text-stroke:0.22px #232221">898.181,00</span>
<span class="t" style="left:1489.59px;top:448px;font-size:14.4px;color:#232221;z-index:5;transform:scaleX(0.9816);transform-origin:right center;-webkit-text-stroke:0.22px #232221">0,01%</span>
<span class="t" style="left:826.20px;top:477px;font-size:14.5px;color:#33312f;z-index:5;transform:scaleX(0.9600);transform-origin:left center">Consorci Recursos Sociosanitaris de les Illes Balears</span>
<span class="t" style="left:1341.43px;top:478px;font-size:14.4px;color:#232221;z-index:5;transform:scaleX(1.0368);transform-origin:right center;-webkit-text-stroke:0.22px #232221">348.311,35</span>
<span class="t" style="left:1489.59px;top:478px;font-size:14.4px;color:#232221;z-index:5;transform:scaleX(1.0485);transform-origin:right center;-webkit-text-stroke:0.22px #232221">0,00%</span>
<span class="t" style="left:826.20px;top:506px;font-size:14.5px;color:#33312f;z-index:5;transform:scaleX(0.9487);transform-origin:left center">Fundació S&#x27;Estel</span>
<span class="t" style="left:1340.37px;top:508px;font-size:14.4px;color:#232221;z-index:5;transform:scaleX(1.0215);transform-origin:right center;-webkit-text-stroke:0.22px #232221">168.802,10</span>
<span class="t" style="left:1489.59px;top:508px;font-size:14.4px;color:#232221;z-index:5;transform:scaleX(1.0485);transform-origin:right center;-webkit-text-stroke:0.22px #232221">0,00%</span>
<span class="t" style="left:826.20px;top:537px;font-size:14.5px;color:#33312f;z-index:5;transform:scaleX(1.0024);transform-origin:left center">Consorci penya-segats del port de Maó</span>
<span class="t" style="left:1341.43px;top:538px;font-size:14.4px;color:#232221;z-index:5;transform:scaleX(1.0368);transform-origin:right center;-webkit-text-stroke:0.22px #232221">114.666,67</span>
<span class="t" style="left:1489.59px;top:538px;font-size:14.4px;color:#232221;z-index:5;transform:scaleX(1.0485);transform-origin:right center;-webkit-text-stroke:0.22px #232221">0,00%</span>
<span class="t" style="left:826.20px;top:569px;font-size:14.5px;color:#33312f;z-index:5;transform:scaleX(0.9710);transform-origin:left center">Universitat de les Illes Balears</span>
<span class="t" style="left:1348.37px;top:570px;font-size:14.4px;color:#232221;z-index:5;transform:scaleX(1.0996);transform-origin:right center;-webkit-text-stroke:0.22px #232221">73.920,00</span>
<span class="t" style="left:1489.59px;top:570px;font-size:14.4px;color:#232221;z-index:5;transform:scaleX(1.0485);transform-origin:right center;-webkit-text-stroke:0.22px #232221">0,00%</span>
<span class="t" style="left:826.20px;top:599px;font-size:14.5px;color:#33312f;z-index:5;transform:scaleX(0.9833);transform-origin:left center">Fundació ES BALUARD Museu d&#x27;art modern i contemporani de P...</span>
<span class="t" style="left:1368.38px;top:600px;font-size:14.4px;color:#232221;z-index:5;transform:scaleX(1.0939);transform-origin:right center;-webkit-text-stroke:0.22px #232221">289,00</span>
<span class="t" style="left:1489.59px;top:600px;font-size:14.4px;color:#232221;z-index:5;transform:scaleX(1.0485);transform-origin:right center;-webkit-text-stroke:0.22px #232221">0,00%</span>
<span class="t" style="left:826.20px;top:629px;font-size:14.5px;color:#33312f;z-index:5;transform:scaleX(0.9626);transform-origin:left center">Agència Tributaria de les Illes Balears (ATIB)</span>
<span class="t" style="left:1384.38px;top:630px;font-size:14.4px;color:#232221;z-index:5;transform:scaleX(1.1026);transform-origin:right center;-webkit-text-stroke:0.22px #232221">0,00</span>
<span class="t" style="left:1489.59px;top:630px;font-size:14.4px;color:#232221;z-index:5;transform:scaleX(1.0485);transform-origin:right center;-webkit-text-stroke:0.22px #232221">0,00%</span>
<span class="t" style="left:826.20px;top:659px;font-size:14.5px;color:#33312f;z-index:5;transform:scaleX(0.9812);transform-origin:left center">Consorci per al Foment d&#x27;Infraestructures Universitàries (COFIU)</span>
<span class="t" style="left:1384.38px;top:660px;font-size:14.4px;color:#232221;z-index:5;transform:scaleX(1.1026);transform-origin:right center;-webkit-text-stroke:0.22px #232221">0,00</span>
<span class="t" style="left:1489.59px;top:660px;font-size:14.4px;color:#232221;z-index:5;transform:scaleX(1.0485);transform-origin:right center;-webkit-text-stroke:0.22px #232221">0,00%</span>
<span class="t" style="left:826.20px;top:690px;font-size:14.5px;color:#33312f;z-index:5;transform:scaleX(0.9589);transform-origin:left center">Fons de Garantia Agrària i Pesquera de les Illes Balears (FOGAIBA)</span>
<span class="t" style="left:1384.38px;top:692px;font-size:14.4px;color:#232221;z-index:5;transform:scaleX(1.1026);transform-origin:right center;-webkit-text-stroke:0.22px #232221">0,00</span>
<span class="t" style="left:1489.59px;top:692px;font-size:14.4px;color:#232221;z-index:5;transform:scaleX(1.0485);transform-origin:right center;-webkit-text-stroke:0.22px #232221">0,00%</span>
<span class="t" style="left:826.20px;top:721px;font-size:14.5px;color:#33312f;z-index:5;transform:scaleX(0.9052);transform-origin:left center">FUNDACIO JARDI BOTANIC DE SOLLER-MUSEU BALEAR DE CIE...</span>
<span class="t" style="left:1384.38px;top:722px;font-size:14.4px;color:#232221;z-index:5;transform:scaleX(1.1026);transform-origin:right center;-webkit-text-stroke:0.22px #232221">0,00</span>
<span class="t" style="left:1489.59px;top:722px;font-size:14.4px;color:#232221;z-index:5;transform:scaleX(1.0485);transform-origin:right center;-webkit-text-stroke:0.22px #232221">0,00%</span>
<span class="t" style="left:962.64px;top:124px;font-size:21px;color:#fff;z-index:5;transform:scaleX(0.8371);transform-origin:center center;-webkit-text-stroke:0.3px #fff">Organisme SEC</span>
<span class="t" style="left:1269.13px;top:124px;font-size:21px;color:#fff;z-index:5;transform:scaleX(0.8407);transform-origin:center center;-webkit-text-stroke:0.3px #fff">Deute viu PDE</span>
<span class="t" style="left:1440.36px;top:124px;font-size:21px;color:#fff;z-index:5;transform:scaleX(0.7712);transform-origin:center center;-webkit-text-stroke:0.3px #fff">Pes (%)</span>
<span class="t" style="left:826.20px;top:752px;font-size:17.5px;color:#fff;z-index:5;transform:scaleX(0.9601);transform-origin:left center;font-weight:700">Total</span>
<span class="t" style="left:1272.26px;top:751px;font-size:18px;color:#fff;z-index:5;transform:scaleX(0.9512);transform-origin:right center;font-weight:700">8.579.149.742,69</span>
<span class="t" style="left:1459.34px;top:751px;font-size:18px;color:#fff;z-index:5;transform:scaleX(0.9203);transform-origin:right center;font-weight:700">100,00%</span>
<span class="t" style="left:392.30px;top:477px;font-size:20.1px;color:#666463;z-index:5;transform:scaleX(0.9238);transform-origin:left center">Distribució del deute per instrument</span>
<span class="t" style="left:321.50px;top:525px;font-size:12.2px;color:#605e5c;z-index:5;transform:scaleX(1.0236);transform-origin:left center">Emissions 0,57 mil M (6,64%)</span>
<span class="t" style="left:361.48px;top:576px;font-size:12.2px;color:#605e5c;z-index:5;transform:scaleX(0.9995);transform-origin:right center">Préstecs</span>
<span class="t" style="left:299.84px;top:590px;font-size:12.2px;color:#605e5c;z-index:5;transform:scaleX(1.0361);transform-origin:right center">2,63 mil M (30,63%)</span>
<span class="t" style="left:594.60px;top:767px;font-size:12.2px;color:#605e5c;z-index:5;transform:scaleX(1.0154);transform-origin:left center">FFCA 5,18 mil M (60,36%)</span>
<span class="t" style="left:519.00px;top:556px;font-size:12.2px;color:#fff;z-index:7;transform:scaleX(0.9061);transform-origin:center center">APP</span>
<span class="t" style="left:477.20px;top:568px;font-size:12.2px;color:#fff;z-index:7;transform:scaleX(1.0491);transform-origin:left center;-webkit-text-stroke:0.3px #fff">0,17 mil M (2,03%)</span>
</div></body></html>
